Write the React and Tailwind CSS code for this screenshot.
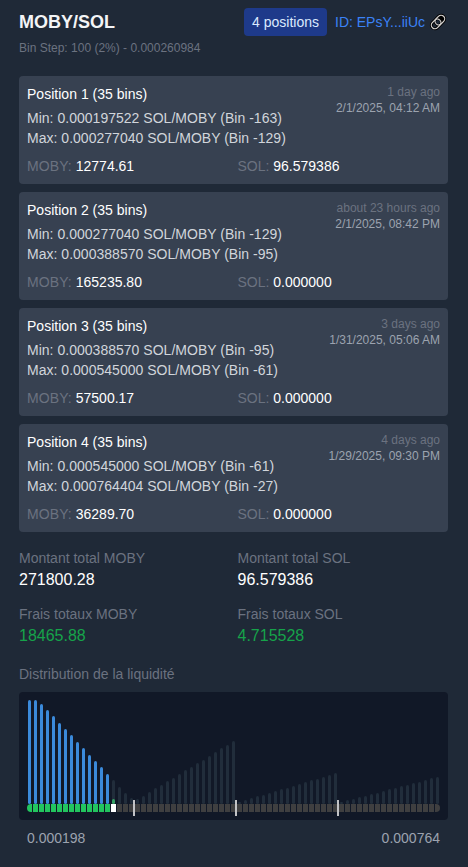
const positions = [
  { n: 1, ago: '1 day ago', date: '2/1/2025, 04:12 AM', min: '0.000197522', minBin: -163, max: '0.000277040', maxBin: -129, moby: '12774.61', sol: '96.579386' },
  { n: 2, ago: 'about 23 hours ago', date: '2/1/2025, 08:42 PM', min: '0.000277040', minBin: -129, max: '0.000388570', maxBin: -95, moby: '165235.80', sol: '0.000000' },
  { n: 3, ago: '3 days ago', date: '1/31/2025, 05:06 AM', min: '0.000388570', minBin: -95, max: '0.000545000', maxBin: -61, moby: '57500.17', sol: '0.000000' },
  { n: 4, ago: '4 days ago', date: '1/29/2025, 09:30 PM', min: '0.000545000', minBin: -61, max: '0.000764404', maxBin: -27, moby: '36289.70', sol: '0.000000' },
];

const totals = [
  { label: 'Montant total MOBY', value: '271800.28', color: 'text-white' },
  { label: 'Montant total SOL', value: '96.579386', color: 'text-white' },
  { label: 'Frais totaux MOBY', value: '18465.88', color: 'text-[#16a34a]' },
  { label: 'Frais totaux SOL', value: '4.715528', color: 'text-[#16a34a]' },
];

// Bar height in pixels for each bin
const bins = [
  104, 104, 100, 94, 88, 81, 75, 69, 62, 56, 49, 43, 37, 30, 24, 17, 11, 6,
  5, 8, 12, 16, 19, 23, 26, 30, 34, 37, 41, 44, 48, 52, 56, 59, 63,
  2, 4, 6, 8, 9, 11, 13, 15, 16, 18, 20, 22, 24, 25, 27, 29, 31,
  2, 4, 5, 7, 8, 10, 11, 13, 15, 16, 18, 19, 21, 22, 24, 26, 27,
];
const ACTIVE = 14;
const BOUNDARIES = [17, 34, 51];

function LinkIcon() {
  return (
    <svg className="h-4 w-4 shrink-0 overflow-visible" viewBox="0 0 16 16" fill="none">
      <g transform="rotate(-46 8 8)">
        <rect x="0" y="4.4" width="10.6" height="7.2" rx="3.6" stroke="#000" strokeWidth="3" />
        <rect x="5.4" y="4.4" width="10.6" height="7.2" rx="3.6" stroke="#000" strokeWidth="3" />
        <path d="M11 4.4h1.4a3.6 3.6 0 0 1 0 7.2H11z" fill="#000" />
        <rect x="0" y="4.4" width="10.6" height="7.2" rx="3.6" stroke="#d6d3d1" strokeWidth="1.2" />
        <rect x="5.4" y="4.4" width="10.6" height="7.2" rx="3.6" stroke="#d6d3d1" strokeWidth="1.2" />
        <circle cx="8" cy="8" r="1.9" fill="#1f2937" />
      </g>
    </svg>
  );
}

function PositionCard({ p }) {
  return (
    <div className="rounded bg-[#374151] p-2">
      <div className="flex items-start justify-between">
        <div>
          <div className="mb-1 tracking-[0.02px] text-white">Position {p.n} (35 bins)</div>
          <div className="tracking-[0.02px] text-[#d1d5db]">
            <div>Min: {p.min} SOL/MOBY (Bin {p.minBin})</div>
            <div>Max: {p.max} SOL/MOBY (Bin {p.maxBin})</div>
          </div>
        </div>
        <div className="text-right text-xs">
          <div className="text-[#6b7280]">{p.ago}</div>
          <div className="text-[#9ca3af]">{p.date}</div>
        </div>
      </div>
      <div className="mt-2 grid grid-cols-2 gap-2 text-white">
        <div><span className="tracking-[0.1px] text-[#6b7280]">MOBY:</span> {p.moby}</div>
        <div><span className="text-[#6b7280]">SOL:</span> {p.sol}</div>
      </div>
    </div>
  );
}

function Bin({ height, index }) {
  const filled = index < ACTIVE;
  const cell = filled ? 'bg-[#22c55e]' : index === ACTIVE ? 'bg-white' : 'bg-[#3f3f40]';
  const ends = index === 0 ? 'rounded-l-full' : index === bins.length - 1 ? 'rounded-r-full' : '';
  return (
    <div className="relative flex h-full w-[5px] flex-col items-center justify-end">
      <div
        className={`flex w-[3px] items-end overflow-hidden rounded-full ${filled ? 'bg-[#3b8adb]' : 'bg-[#212d3b]'}`}
        style={{ height }}
      >
        {index === ACTIVE && <div className="h-[5px] w-full rounded-t-full bg-[#34a164]" />}
      </div>
      <div className={`h-2 w-full shrink-0 ${cell} ${ends}`} />
      {BOUNDARIES.includes(index) && (
        <div className="absolute -right-px -bottom-1 z-10 h-4 w-0.5 bg-[#c2c3c6]" />
      )}
    </div>
  );
}

export default function App() {
  return (
    <div className="h-[867px] w-[468px] overflow-hidden bg-[#1f2937] pt-2 pr-5 pl-[19px] font-['Liberation_Sans',Arial,sans-serif] text-sm">
      <div className="mb-5 flex items-start justify-between">
        <div>
          <h1 className="mb-1 text-lg leading-7 font-bold text-[#f3f4f6]">MOBY/SOL</h1>
          <div className="text-xs text-[#6b7280]">Bin Step: 100 (2%) - 0.000260984</div>
        </div>
        <div className="flex items-center gap-2">
          <span className="rounded bg-[#1e3a8a] px-2 py-1 text-[#dbeafe]">4 positions</span>
          <a className="flex items-center gap-[5px] pr-0.5 text-[#3b82f6]">
            ID: EPsY...iiUc
            <LinkIcon />
          </a>
        </div>
      </div>

      <div className="flex flex-col gap-2">
        {positions.map((p) => <PositionCard key={p.n} p={p} />)}
      </div>

      <div className="mt-4 grid grid-cols-2 gap-x-2 gap-y-3">
        {totals.map((t) => (
          <div key={t.label}>
            <div className="text-[#6b7280]">{t.label}</div>
            <div className={`text-base ${t.color}`}>{t.value}</div>
          </div>
        ))}
      </div>

      <div className="mt-4">
        <div className="mb-2 text-[#6b7280]">Distribution de la liquidité</div>
        <div className="flex h-32 gap-px rounded bg-[#111827] p-2">
          {bins.map((h, i) => <Bin key={i} height={h} index={i} />)}
        </div>
        <div className="mt-2 flex justify-between px-2 text-[#9ca3af]">
          <span>0.000198</span>
          <span>0.000764</span>
        </div>
      </div>
    </div>
  );
}
